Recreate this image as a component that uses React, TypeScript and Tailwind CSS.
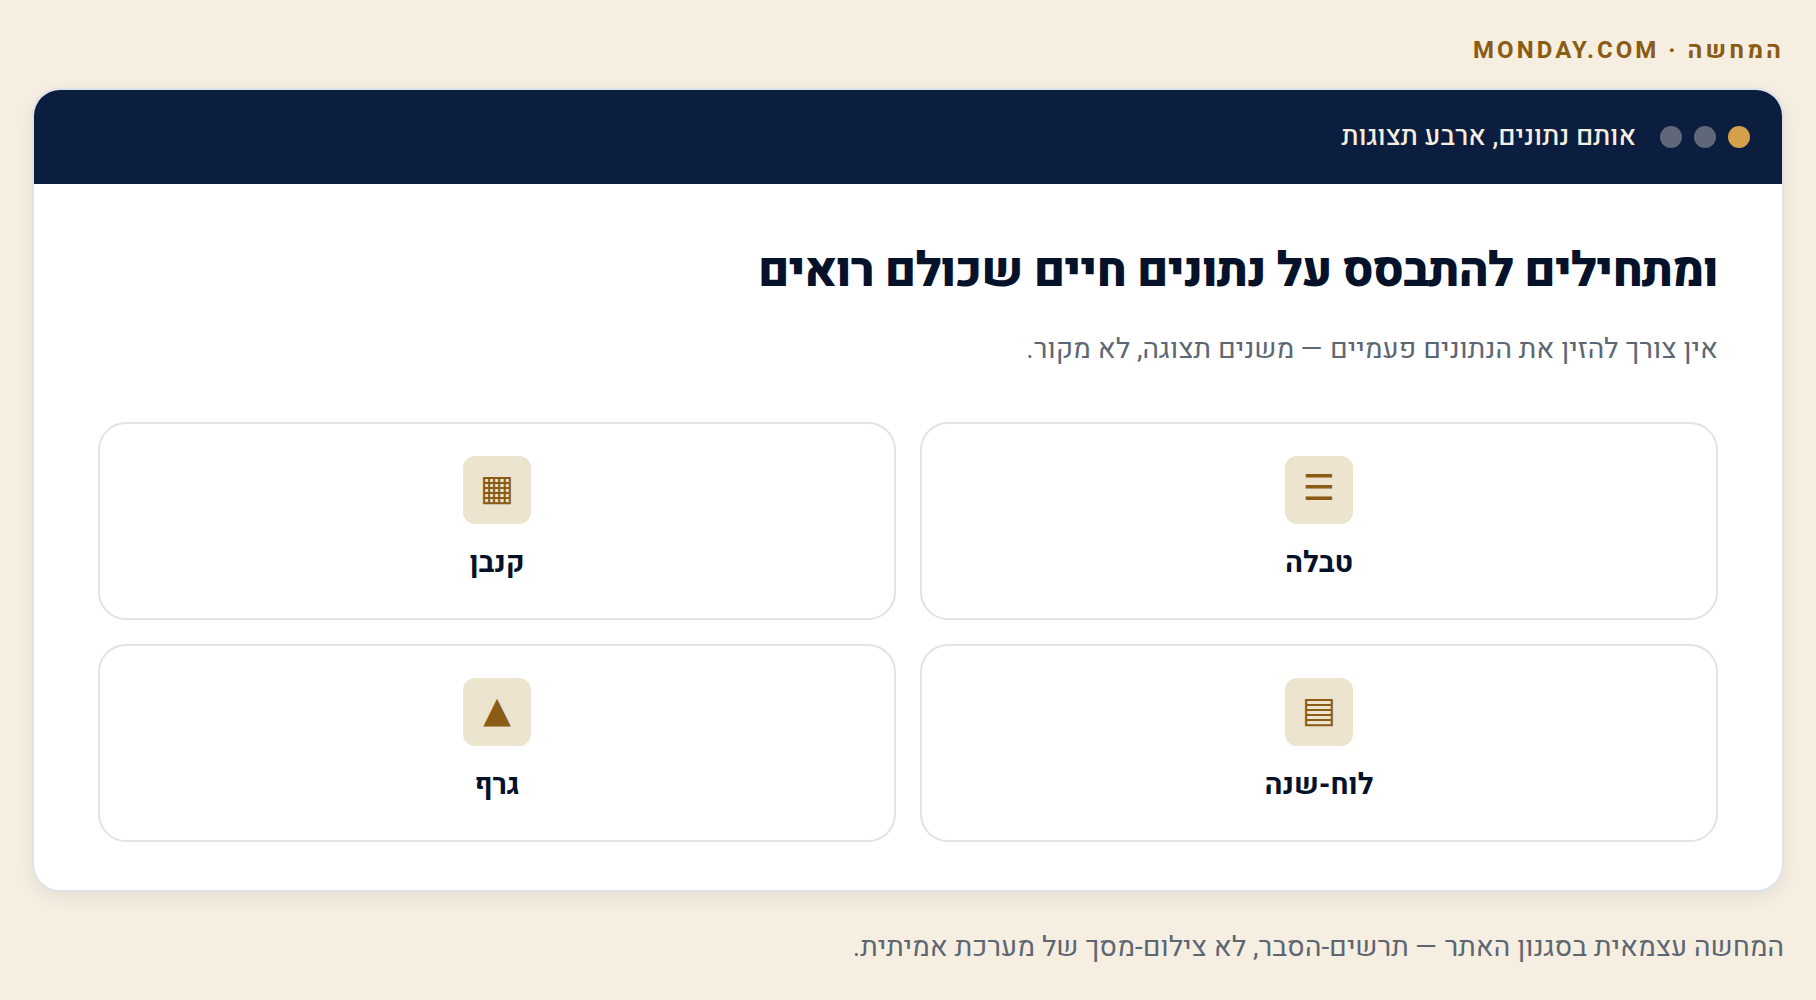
const views = [
  { label: "טבלה", glyph: "☰" },
  { label: "קנבן", glyph: "▦" },
  { label: "לוח-שנה", glyph: "▤" },
  { label: "גרף", glyph: "▲" },
];

export default function App() {
  return (
    <main
      dir="rtl"
      className="min-h-screen bg-[#f6eee0] px-8 py-8 font-['Heebo','Roboto','Open_Sans',sans-serif] text-[#051229]"
    >
      <p className="mb-[18px] text-[24px] leading-[38px] font-bold tracking-[3px] text-[#8a5c14]">
        המחשה · MONDAY.COM
      </p>
      <section className="overflow-hidden rounded-[28px] border-2 border-[#dfe2e7] bg-white shadow-[0_6px_18px_rgba(10,30,63,0.07)]">
        <header className="flex items-center gap-6 bg-[#0b1e3f] px-8 py-6 text-[27px] leading-[46px] font-medium text-[#f6eee0]">
          <div className="flex gap-3">
            <span className="size-[22px] rounded-full bg-[#d4a04a]" />
            <span className="size-[22px] rounded-full bg-[#5f6779]" />
            <span className="size-[22px] rounded-full bg-[#5f6779]" />
          </div>
          <span>אותם נתונים, ארבע תצוגות</span>
        </header>
        <div className="px-16 pt-14 pb-12">
          <h1 className="text-[48px] leading-[62px] font-extrabold tracking-[-1px]">
            ומתחילים להתבסס על נתונים חיים שכולם רואים
          </h1>
          <p className="mt-6 text-[28px] leading-[48px] text-[#5d6673]">
            אין צורך להזין את הנתונים פעמיים — משנים תצוגה, לא מקור.
          </p>
          <ul className="mt-12 grid grid-cols-2 gap-6">
            {views.map((v) => (
              <li
                key={v.label}
                className="flex flex-col items-center rounded-[28px] border-2 border-[#e2e2e7] py-8"
              >
                <span
                  aria-hidden="true"
                  className="flex size-[68px] items-center justify-center rounded-xl bg-[#ece4cf] pb-1 font-['DejaVu_Sans',sans-serif] text-[36px] leading-[44px] text-[#8a5c14]"
                >
                  {v.glyph}
                </span>
                <h2 className="mt-4 text-[29px] leading-[46px] font-bold">{v.label}</h2>
              </li>
            ))}
          </ul>
        </div>
      </section>
      <p className="mt-8 text-[28px] leading-[48px] text-[#5d6673]">
        המחשה עצמאית בסגנון האתר — תרשים-הסבר, לא צילום-מסך של מערכת אמיתית.
      </p>
    </main>
  );
}
